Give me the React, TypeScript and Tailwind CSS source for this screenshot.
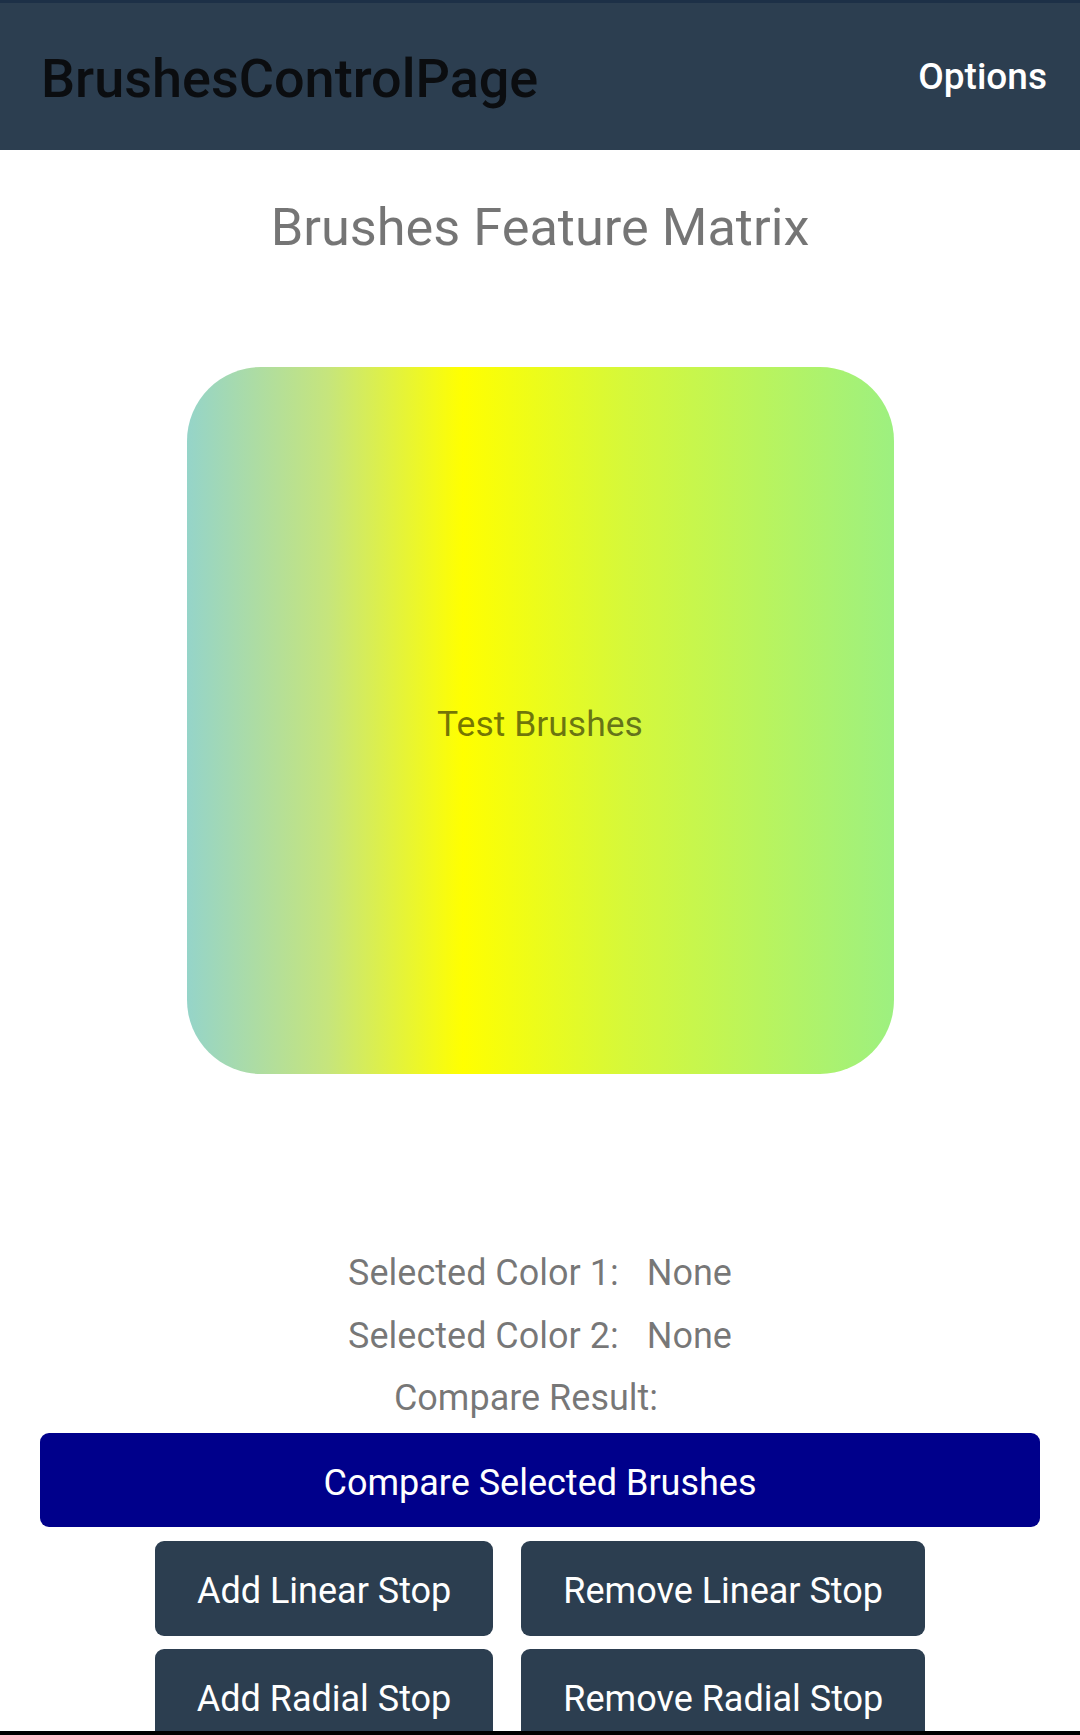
import React from 'react';

const stopButtons = [
	['Add Linear Stop', 'Remove Linear Stop'],
	['Add Radial Stop', 'Remove Radial Stop'],
];

function InfoRow({ label, value, className = '' }: { label: string; value: string; className?: string }) {
	return (
		<div className={`flex gap-[28px] text-[36px] leading-[39px] text-black/[0.54] ${className}`}>
			<span>{label}</span>
			<span>{value}</span>
		</div>
	);
}

export default function App() {
	return (
		<div className="flex h-[1735px] flex-col overflow-hidden bg-white font-['Roboto',sans-serif]">
			<div className="h-[3px] shrink-0 bg-[#1d3047]" />
			<header className="flex h-[147px] shrink-0 items-center justify-between bg-[#2c3e50] pl-[41px] pr-[33px]">
				<h1 className="mt-[5px] text-[54px] font-medium leading-none text-[#0b0d10]">
					BrushesControlPage
				</h1>
				<span className="text-[37px] font-medium leading-none text-white">Options</span>
			</header>

			<main className="flex min-h-0 flex-1 flex-col items-center overflow-hidden">
				<h2 className="mt-[47px] text-[52.3px] leading-[61px] text-black/[0.54]">
					Brushes Feature Matrix
				</h2>

				<div className="mt-[109px] flex h-[707px] w-[707px] shrink-0 items-center justify-center rounded-[74px] bg-[linear-gradient(90deg,#95d4c9_0%,#c6e57c_20%,#ffff00_39%,#d6f83a_62%,#9df080_100%)]">
					<span className="mt-[7px] text-[35.5px] leading-[42px] text-black/[0.54]">Test Brushes</span>
				</div>

				<InfoRow className="mt-[180px]" label="Selected Color 1:" value="None" />
				<InfoRow className="mt-[24px]" label="Selected Color 2:" value="None" />
				<InfoRow className="mt-[23px]" label="Compare Result:" value="" />

				<button className="mt-[15px] flex h-[94px] w-[1000px] shrink-0 items-center justify-center rounded-[9px] bg-[#00008b] pt-[5px] text-[36px] text-white">
					Compare Selected Brushes
				</button>

				{stopButtons.map((row, i) => (
					<div key={i} className={`flex shrink-0 justify-center gap-[28px] ${i === 0 ? 'mt-[14px]' : 'mt-[13px]'}`}>
						{row.map((label) => (
							<button
								key={label}
								className="h-[95px] rounded-[9px] bg-[#2c3e50] px-[42px] pt-[5px] text-[36px] text-white"
							>
								{label}
							</button>
						))}
					</div>
				))}
			</main>

			<div className="h-[4px] shrink-0 bg-black" />
		</div>
	);
}
